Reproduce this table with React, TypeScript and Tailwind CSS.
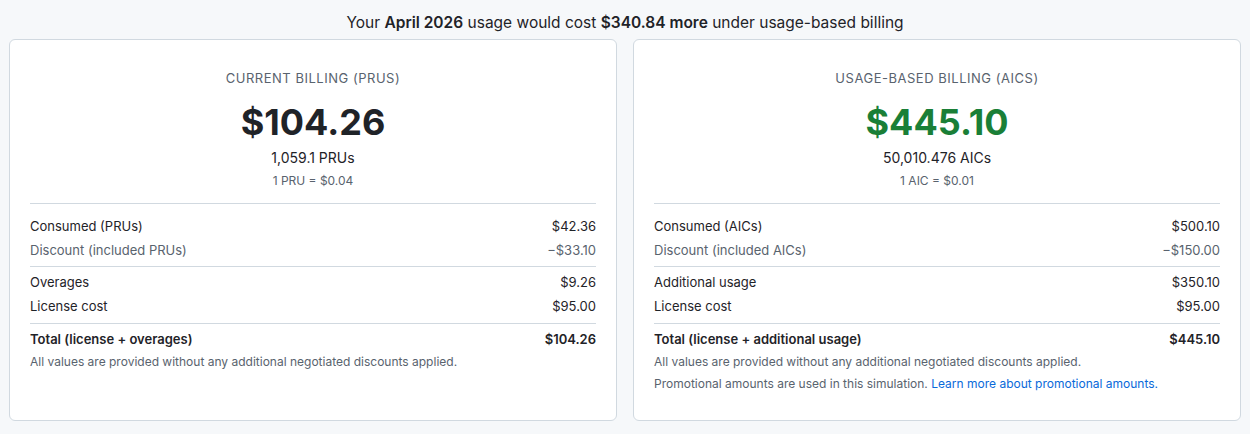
import React from "react";

type Row = { label: string; value: string; muted?: boolean };

function Card(props: {
  title: string;
  amount: string;
  amountClass: string;
  units: string;
  rate: string;
  groups: Row[][];
  totalLabel: string;
  totalValue: string;
  promo?: boolean;
}) {
  return (
    <div className="flex-1 rounded-md border border-[#d1d9e0] bg-white px-5 pt-[29px] pb-5">
      <div className="flex flex-col items-center">
        <div className="text-[13px] leading-[18px] tracking-[0.04em] text-[#59636e] uppercase">{props.title}</div>
        <div className={"mt-[13px] text-[36px] leading-[44px] font-bold " + props.amountClass}>{props.amount}</div>
        <div className="mt-[4px] text-[14px] leading-[20px] text-[#1f2328]">{props.units}</div>
        <div className="mt-[4px] text-[12px] leading-[18px] text-[#59636e]">{props.rate}</div>
      </div>
      <div className="mt-[13px] border-t border-[#d1d9e0]">
        <div className="pt-[10px] pb-[4px]">
          {props.groups[0].map((r) => (
            <RowLine key={r.label} r={r} />
          ))}
        </div>
        <div className="border-t border-[#d1d9e0] pt-[3px] pb-[5px]">
          {props.groups[1].map((r) => (
            <RowLine key={r.label} r={r} />
          ))}
        </div>
        <div className="border-t border-[#d1d9e0] pt-[5px]">
          <div className="flex justify-between text-[13px] leading-[20px] font-semibold text-[#1f2328]">
            <span>{props.totalLabel}</span>
            <span>{props.totalValue}</span>
          </div>
          <div className="mt-[4px] text-[12px] leading-[18px] text-[#59636e]">
            All values are provided without any additional negotiated discounts applied.
          </div>
          {props.promo && (
            <div className="mt-[4px] text-[12px] leading-[18px] text-[#59636e]">
              Promotional amounts are used in this simulation.{" "}
              <a className="text-[#0969da]">Learn more about promotional amounts.</a>
            </div>
          )}
        </div>
      </div>
    </div>
  );
}

function RowLine({ r }: { r: Row }) {
  return (
    <div
      className={
        "flex justify-between text-[13px] leading-[20px] py-[2px] " +
        (r.muted ? "text-[#59636e]" : "text-[#1f2328]")
      }
    >
      <span>{r.label}</span>
      <span>{r.value}</span>
    </div>
  );
}

export default function App() {
  return (
    <div
      className="min-h-[434px] bg-[#f6f8fa] px-[9px] pt-[13px] pb-[12px]"
      style={{ fontFamily: "Inter, 'Noto Sans', sans-serif" }}
    >
      <div className="text-center text-[15.5px] leading-[20px] text-[#1f2328]">
        Your <b className="font-semibold">April 2026</b> usage would cost{" "}
        <b className="font-semibold">$340.84 more</b> under usage-based billing
      </div>
      <div className="mt-[6px] flex gap-4 items-stretch h-[382px]">
        <Card
          title="Current billing (PRUs)"
          amount="$104.26"
          amountClass="text-[#1f2328]"
          units="1,059.1 PRUs"
          rate="1 PRU = $0.04"
          groups={[
            [
              { label: "Consumed (PRUs)", value: "$42.36" },
              { label: "Discount (included PRUs)", value: "\u2212$33.10", muted: true },
            ],
            [
              { label: "Overages", value: "$9.26" },
              { label: "License cost", value: "$95.00" },
            ],
          ]}
          totalLabel="Total (license + overages)"
          totalValue="$104.26"
        />
        <Card
          title="Usage-based billing (AICs)"
          amount="$445.10"
          amountClass="text-[#1a7f37]"
          units="50,010.476 AICs"
          rate="1 AIC = $0.01"
          groups={[
            [
              { label: "Consumed (AICs)", value: "$500.10" },
              { label: "Discount (included AICs)", value: "\u2212$150.00", muted: true },
            ],
            [
              { label: "Additional usage", value: "$350.10" },
              { label: "License cost", value: "$95.00" },
            ],
          ]}
          totalLabel="Total (license + additional usage)"
          totalValue="$445.10"
          promo
        />
      </div>
    </div>
  );
}
